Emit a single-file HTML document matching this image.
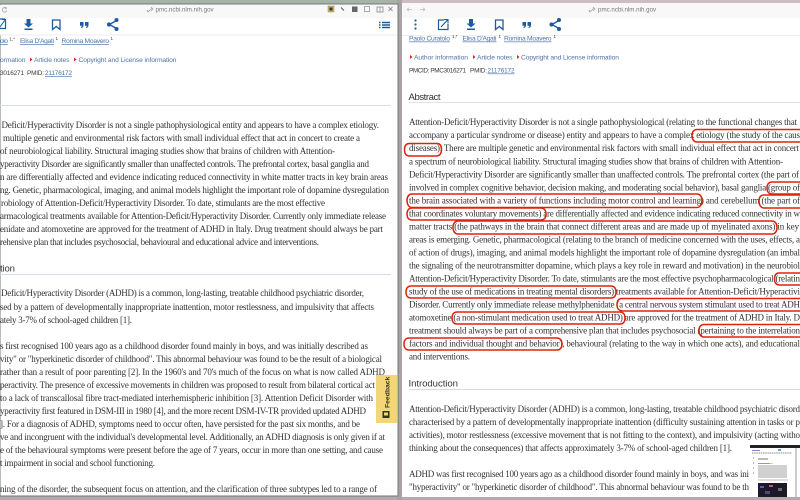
<!DOCTYPE html>
<html lang="en"><head><meta charset="utf-8"><title>PMC article</title>
<style>
html,body{margin:0;padding:0;width:800px;height:500px;overflow:hidden;background:#b5a9ad}
svg{display:block;filter:blur(.3px)}
.b{font:9px "Liberation Serif",serif;fill:#333}
.s{font:6.700px "Liberation Sans",sans-serif;fill:#5173ac}
.m{font:6.400px "Liberation Sans",sans-serif;fill:#3c3c3c}
.h{font:9.600px "Liberation Sans",sans-serif;fill:#333}
.u{font:6.200px "Liberation Sans",sans-serif;fill:#777}
.ic{fill:#1f5a9c}
.ov{fill:none;stroke:#e0220a;stroke-width:1.500}
</style></head><body>
<svg width="800" height="500" viewBox="0 0 800 500" xmlns="http://www.w3.org/2000/svg">
<defs>
<clipPath id="cl"><rect x="0" y="4" width="397" height="492"/></clipPath>
<clipPath id="cr"><rect x="402" y="3" width="398" height="494"/></clipPath>
</defs>
<rect width="800" height="500" fill="#b5a9ad"/>
<rect width="400" height="4" fill="#a7b3a6"/>
<rect x="400" width="400" height="4" fill="#cdbdc0"/>
<rect x="397" y="0" width="5" height="500" fill="#a9a3a6"/>

<!-- LEFT WINDOW -->
<rect x="0" y="4" width="398" height="492" fill="#fff" stroke="#6d7a70" stroke-width="1"/>
<g clip-path="url(#cl)">
<rect x="0" y="5" width="397" height="13" fill="#f7f8f7"/>
<path d="M6 8a2.300 2.300 0 1 0 .8 2.500M6.200 7v1.800H4.500" fill="none" stroke="#999" stroke-width=".7"/>
<path d="M149 11l3-3M151 7l2 2-2 2M148 10l-1 1 1 1 1-1" stroke="#999" fill="none" stroke-width=".7"/>
<text x="155.500" y="11.500" class="u">pmc.ncbi.nlm.nih.gov</text>
<rect x="328" y="6" width="6" height="6" fill="#c9b46a" stroke="#9a8d60" stroke-width=".5"/><rect x="329.500" y="7.500" width="3" height="3" fill="#333"/>
<path d="M341 7.500l3 3" stroke="#555" stroke-width="1"/>
<rect x="352" y="6.500" width="5.500" height="5.500" fill="#666"/>
<rect x="364.500" y="6.500" width="5" height="5" fill="none" stroke="#999" stroke-width=".8"/>
<rect x="377" y="7" width="6" height="5" fill="none" stroke="#888" stroke-width=".8"/><path d="M380 7v5" stroke="#888" stroke-width=".7"/>
<path d="M388.500 7l4 4M392.500 7l-4 4" stroke="#777" stroke-width=".8"/>

<rect x="0" y="18" width="397" height="17" fill="#fff"/>
<path d="M0 35H397" stroke="#eceef0" stroke-width="1"/>
<path d="M0 19h5M5.500 19v9.500H0" fill="none" stroke="#1f5a9c" stroke-width="1.200"/><path d="M0 27l5-7M2 19.500h3.500V23" fill="none" stroke="#1f5a9c" stroke-width="1"/>
<path class="ic" d="M26.500 19h4v4.500h2.500l-4.500 4-4.500-4h2.500zM24.500 28.500h8v1.500h-8z"/>
<path d="M52.500 20h7.500v9.500l-3.700-3-3.800 3z" fill="none" stroke="#1f5a9c" stroke-width="1.300"/>
<path class="ic" d="M80 22h3.500v3.200c0 1.300-.8 2.300-2.200 2.800l-.4-.9c.7-.3 1-.8 1-1.400H80zM85 22h3.500v3.200c0 1.300-.8 2.300-2.200 2.800l-.4-.9c.7-.3 1-.8 1-1.400H85z"/>
<path d="M109.500 24.500l7-4M109.500 24.500l7 4" stroke="#1f5a9c" stroke-width="1.300" fill="none"/><circle class="ic" cx="109" cy="24.500" r="2.100"/><circle class="ic" cx="116.500" cy="20" r="2"/><circle class="ic" cx="116.500" cy="29" r="2"/>
<path d="M379 22.500h1.500M382 22.500h8M379 25h1.500M382 25h8M379 27.500h1.500M382 27.500h8" stroke="#1f5a9c" stroke-width="1.400"/>

<text x="0" y="43" class="s" textLength="8" lengthAdjust="spacing" text-decoration="underline">olo</text>
<text x="9.500" y="40.500" class="m" style="font-size:4.500px">1,*</text>
<text x="20" y="43" class="s" textLength="34" lengthAdjust="spacing" text-decoration="underline">Elisa D'Agati</text>
<text x="55.500" y="40" class="m" style="font-size:4.500px">1</text>
<text x="61.500" y="43" class="s" textLength="47.500" lengthAdjust="spacing" text-decoration="underline">Romina Moavero</text>
<text x="110.500" y="40" class="m" style="font-size:4.500px">1</text>
<text x="0" y="62" class="s" textLength="25.500" lengthAdjust="spacing">ormation</text>
<path d="M30 57.500l2.500 2-2.500 2z" fill="#d9281a"/>
<text x="34" y="62" class="s" textLength="35.500" lengthAdjust="spacing">Article notes</text>
<path d="M74 57.500l2.500 2-2.500 2z" fill="#d9281a"/>
<text x="78.500" y="62" class="s" textLength="98" lengthAdjust="spacing">Copyright and License information</text>
<text x="0" y="75" class="m" textLength="24" lengthAdjust="spacing">3016271</text>
<text x="27" y="75" class="m" textLength="17" lengthAdjust="spacing">PMID:</text>
<text x="45" y="75" class="m" textLength="27" lengthAdjust="spacing" style="fill:#4a6da8" text-decoration="underline">21176172</text>
<path d="M0 105.500H391" stroke="#d9dde6" stroke-width="1"/>

<text class="b" x="1.500" y="128" textLength="377.500" lengthAdjust="spacing">Deficit/Hyperactivity Disorder is not a single pathophysiological entity and appears to have a complex etiology.</text>
<text class="b" x="3" y="141" textLength="357" lengthAdjust="spacing">multiple genetic and environmental risk factors with small individual effect that act in concert to create a</text>
<text class="b" x="0" y="154" textLength="335" lengthAdjust="spacing">of neurobiological liability. Structural imaging studies show that brains of children with Attention-</text>
<text class="b" x="0" y="167" textLength="369" lengthAdjust="spacing">yperactivity Disorder are significantly smaller than unaffected controls. The prefrontal cortex, basal ganglia and</text>
<text class="b" x="0" y="180" textLength="388" lengthAdjust="spacing">n are differentially affected and evidence indicating reduced connectivity in white matter tracts in key brain areas</text>
<text class="b" x="0" y="193" textLength="389" lengthAdjust="spacing">ng. Genetic, pharmacological, imaging, and animal models highlight the important role of dopamine dysregulation</text>
<text class="b" x="1" y="206" textLength="324" lengthAdjust="spacing">robiology of Attention-Deficit/Hyperactivity Disorder. To date, stimulants are the most effective</text>
<text class="b" x="0" y="219" textLength="386" lengthAdjust="spacing">armacological treatments available for Attention-Deficit/Hyperactivity Disorder. Currently only immediate release</text>
<text class="b" x="0" y="232" textLength="383" lengthAdjust="spacing">enidate and atomoxetine are approved for the treatment of ADHD in Italy. Drug treatment should always be part</text>
<text class="b" x="0" y="245" textLength="319" lengthAdjust="spacing">rehensive plan that includes psychosocial, behavioural and educational advice and interventions.</text>

<text class="h" x="0" y="271.500" textLength="15" lengthAdjust="spacing">tion</text>
<path d="M0 274.500H391" stroke="#d5dcec" stroke-width="1"/>

<text class="b" x="1" y="296" textLength="363" lengthAdjust="spacing">Deficit/Hyperactivity Disorder (ADHD) is a common, long-lasting, treatable childhood psychiatric disorder,</text>
<text class="b" x="0" y="310" textLength="374" lengthAdjust="spacing">sed by a pattern of developmentally inappropriate inattention, motor restlessness, and impulsivity that affects</text>
<text class="b" x="0" y="323" textLength="132" lengthAdjust="spacing">ately 3-7% of school-aged children [1].</text>
<text class="b" x="0" y="349" textLength="368" lengthAdjust="spacing">s first recognised 100 years ago as a childhood disorder found mainly in boys, and was initially described as</text>
<text class="b" x="0" y="362" textLength="382" lengthAdjust="spacing">vity" or "hyperkinetic disorder of childhood". This abnormal behaviour was found to be the result of a biological</text>
<text class="b" x="0" y="375" textLength="385" lengthAdjust="spacing">rather than a result of poor parenting [2]. In the 1960's and 70's much of the focus on what is now called ADHD</text>
<text class="b" x="0" y="388" textLength="375" lengthAdjust="spacing">peractivity. The presence of excessive movements in children was proposed to result from bilateral cortical act</text>
<text class="b" x="0" y="401" textLength="373" lengthAdjust="spacing">to a lack of transcallosal fibre tract-mediated interhemispheric inhibition [3]. Attention Deficit Disorder with</text>
<text class="b" x="0" y="414" textLength="366" lengthAdjust="spacing">yperactivity first featured in DSM-III in 1980 [4], and the more recent DSM-IV-TR provided updated ADHD</text>
<text class="b" x="0" y="427" textLength="360" lengthAdjust="spacing">]. For a diagnosis of ADHD, symptoms need to occur often, have persisted for the past six months, and be</text>
<text class="b" x="0" y="440" textLength="385" lengthAdjust="spacing">ve and incongruent with the individual's developmental level. Additionally, an ADHD diagnosis is only given if at</text>
<text class="b" x="0" y="453" textLength="383" lengthAdjust="spacing">e of the behavioural symptoms were present before the age of 7 years, occur in more than one setting, and cause</text>
<text class="b" x="0" y="466" textLength="155" lengthAdjust="spacing">t impairment in social and school functioning.</text>
<text class="b" x="0" y="492" textLength="377" lengthAdjust="spacing">ning of the disorder, the subsequent focus on attention, and the clarification of three subtypes led to a range of</text>

<rect x="376" y="375" width="21" height="48" fill="#f3d678"/>
<rect x="382.500" y="411" width="7" height="7" fill="#333"/><rect x="384" y="412.500" width="4" height="3" fill="#f3d678"/>
<text transform="translate(389.500,408) rotate(-90)" style="font:bold 6.800px 'Liberation Sans',sans-serif;fill:#333">Feedback</text>
</g>

<!-- RIGHT WINDOW -->
<rect x="402" y="3" width="398" height="494" fill="#fff"/>
<g clip-path="url(#cr)">
<rect x="402" y="3" width="398" height="15" fill="#f8f8f8"/>
<path d="M407 9.500h5M407 9.500l2-1.800M407 9.500l2 1.800M420 9.500h5M425 9.500l-2-1.800M425 9.500l-2 1.800" stroke="#b8b8b8" stroke-width=".7" fill="none"/>
<path d="M591 11l3-3M593 7l2 2-2 2M590 10l-1 1 1 1 1-1" stroke="#999" fill="none" stroke-width=".7"/>
<text x="598" y="11.500" class="u">pmc.ncbi.nlm.nih.gov</text>
<circle class="ic" cx="415.500" cy="20.500" r="1.100"/><circle class="ic" cx="415.500" cy="24.500" r="1.100"/><circle class="ic" cx="415.500" cy="28.500" r="1.100"/>
<path d="M444 20h-5.500v9.500H448V24" fill="none" stroke="#1f5a9c" stroke-width="1.200"/><path d="M441 27l6.500-7M444 19.500h4v4" fill="none" stroke="#1f5a9c" stroke-width="1.100"/>
<path class="ic" d="M469 19h4v4.500h2.500l-4.500 4-4.500-4h2.500zM467 28.500h8v1.500h-8z"/>
<path d="M495.500 20h7.500v9.500l-3.700-3-3.800 3z" fill="none" stroke="#1f5a9c" stroke-width="1.300"/>
<path class="ic" d="M522.500 22h3.500v3.200c0 1.300-.8 2.300-2.200 2.800l-.4-.9c.7-.3 1-.8 1-1.400h-1.900zM527.500 22h3.500v3.200c0 1.300-.8 2.300-2.200 2.800l-.4-.9c.7-.3 1-.8 1-1.400h-1.900z"/>
<path d="M552 24.500l7-4M552 24.500l7 4" stroke="#1f5a9c" stroke-width="1.300" fill="none"/><circle class="ic" cx="551.500" cy="24.500" r="2.100"/><circle class="ic" cx="559" cy="20" r="2"/><circle class="ic" cx="559" cy="29" r="2"/>
<path d="M402 35.500H800" stroke="#eceef0"/>

<text x="409" y="40.500" class="s" textLength="41" lengthAdjust="spacing" text-decoration="underline">Paolo Curatolo</text>
<text x="452" y="38" class="m" style="font-size:4.500px">1,*</text>
<text x="462.500" y="40.500" class="s" textLength="34" lengthAdjust="spacing" text-decoration="underline">Elisa D'Agati</text>
<text x="498.500" y="38" class="m" style="font-size:4.500px">1</text>
<text x="504" y="40.500" class="s" textLength="47.500" lengthAdjust="spacing" text-decoration="underline">Romina Moavero</text>
<text x="553.500" y="38" class="m" style="font-size:4.500px">1</text>
<path d="M410 55l2.500 2-2.500 2z" fill="#d9281a"/>
<text x="414" y="59.500" class="s" textLength="54" lengthAdjust="spacing">Author information</text>
<path d="M473 55l2.500 2-2.500 2z" fill="#d9281a"/>
<text x="477" y="59.500" class="s" textLength="35.500" lengthAdjust="spacing">Article notes</text>
<path d="M517 55l2.500 2-2.500 2z" fill="#d9281a"/>
<text x="521" y="59.500" class="s" textLength="98" lengthAdjust="spacing">Copyright and License information</text>
<text x="409" y="72.500" class="m" textLength="57" lengthAdjust="spacing">PMCID: PMC3016271</text>
<text x="470" y="72.500" class="m" textLength="17" lengthAdjust="spacing">PMID:</text>
<text x="487.500" y="72.500" class="m" textLength="27" lengthAdjust="spacing" style="fill:#4a6da8" text-decoration="underline">21176172</text>
<text class="h" x="408.500" y="100" textLength="32" lengthAdjust="spacing">Abstract</text>
<path d="M409 102.500H800" stroke="#dfe2e8" stroke-width="1"/>

<text class="b" x="409" y="125" textLength="388" lengthAdjust="spacing">Attention-Deficit/Hyperactivity Disorder is not a single pathophysiological (relating to the functional changes that</text>
<text class="b" x="409" y="138" textLength="391" lengthAdjust="spacing">accompany a particular syndrome or disease) entity and appears to have a complex etiology (the study of the caus</text>
<text class="b" x="409" y="151" textLength="390" lengthAdjust="spacing">diseases). There are multiple genetic and environmental risk factors with small individual effect that act in concert</text>
<text class="b" x="409" y="164.500" textLength="374" lengthAdjust="spacing">a spectrum of neurobiological liability. Structural imaging studies show that brains of children with Attention-</text>
<text class="b" x="409" y="177.500" textLength="390" lengthAdjust="spacing">Deficit/Hyperactivity Disorder are significantly smaller than unaffected controls. The prefrontal cortex (the part of</text>
<text class="b" x="409" y="190.500" textLength="391" lengthAdjust="spacing">involved in complex cognitive behavior, decision making, and moderating social behavior), basal ganglia (group of</text>
<text class="b" x="409" y="203.500" textLength="391" lengthAdjust="spacing">the brain associated with a variety of functions including motor control and learning) and cerebellum (the part of</text>
<text class="b" x="409" y="216.500" textLength="391" lengthAdjust="spacing">that coordinates voluntary movements) are differentially affected and evidence indicating reduced connectivity in w</text>
<text class="b" x="409" y="229.500" textLength="390" lengthAdjust="spacing">matter tracts (the pathways in the brain that connect different areas and are made up of myelinated axons) in key</text>
<text class="b" x="409" y="242.500" textLength="391" lengthAdjust="spacing">areas is emerging. Genetic, pharmacological (relating to the branch of medicine concerned with the uses, effects, a</text>
<text class="b" x="409" y="255.500" textLength="391" lengthAdjust="spacing">of action of drugs), imaging, and animal models highlight the important role of dopamine dysregulation (an imbal</text>
<text class="b" x="409" y="268.500" textLength="391" lengthAdjust="spacing">the signaling of the neurotransmitter dopamine, which plays a key role in reward and motivation) in the neurobiol</text>
<text class="b" x="409" y="281.500" textLength="391" lengthAdjust="spacing">Attention-Deficit/Hyperactivity Disorder. To date, stimulants are the most effective psychopharmacological (relatin</text>
<text class="b" x="409" y="294.500" textLength="391" lengthAdjust="spacing">study of the use of medications in treating mental disorders) treatments available for Attention-Deficit/Hyperactivi</text>
<text class="b" x="409" y="307.500" textLength="391" lengthAdjust="spacing">Disorder. Currently only immediate release methylphenidate (a central nervous system stimulant used to treat ADH</text>
<text class="b" x="409" y="320.500" textLength="391" lengthAdjust="spacing">atomoxetine (a non-stimulant medication used to treat ADHD) are approved for the treatment of ADHD in Italy. D</text>
<text class="b" x="409" y="333.500" textLength="391" lengthAdjust="spacing">treatment should always be part of a comprehensive plan that includes psychosocial (pertaining to the interrelation</text>
<text class="b" x="409" y="346.500" textLength="391" lengthAdjust="spacing">factors and individual thought and behavior), behavioural (relating to the way in which one acts), and educational</text>
<text class="b" x="409" y="359.500" textLength="61" lengthAdjust="spacing">and interventions.</text>

<path d="M800 129.500H697c-3 0-5 2-5 6s2 6.500 5 6.500h103" class="ov"/>
<path d="M437 143.500c3 0 4.500 2 4.500 6s-2 6.500-5 6.500h-27c-3 0-5-2-5-6.500s2-6 5-6z" class="ov"/>
<path d="M800 182h-28c-3 0-5 2-5 6s2 6 5 6h28" class="ov"/>
<path d="M412 194h285c3 0 5 2.500 5 6.500s-2 7-5 7H412c-3 0-5-3-5-7s2-6.500 5-6.500z" class="ov"/>
<path d="M800 195h-36c-3 0-5 2-5 6s2 7 5 7h36" class="ov"/>
<path d="M412 208h129c3 0 5 2 5 6s-2 6-5 6H412c-3 0-5-2-5-6s2-6 5-6z" class="ov"/>
<path d="M458 221h314c3 0 5 2.500 5 6.500s-2 6.500-5 6.500H458c-3 0-5-2.500-5-6.500s2-6.500 5-6.500z" class="ov"/>
<path d="M800 273h-21c-3 0-4.500 2-4.500 6s2 6 5 6h20.500" class="ov"/>
<path d="M411 286h200c3 0 5 2 5 6s-2 6-5 6H411c-3 0-5-2-5-6s2-6 5-6z" class="ov"/>
<path d="M800 298.500H622c-3 0-5 2-5 6.500s3 6 6 6h177" class="ov"/>
<path d="M457 312h163c3 0 5 2 5 6s-2 6-5 6H457c-3 0-5-2-5-6s2-6 5-6z" class="ov"/>
<path d="M800 324.500H704c-3 0-5 2-5 6s2 6.500 5 6.500h96" class="ov"/>
<path d="M409 338h148c3 0 5 2 5 6s-2 6-5 6H409c-3 0-5-2-5-6s2-6 5-6z" class="ov"/>

<text class="h" x="408.500" y="386.500" textLength="49.500" lengthAdjust="spacing">Introduction</text>
<path d="M409 389.500H800" stroke="#d9d9e4" stroke-width="1"/>
<text class="b" x="409" y="412" textLength="391" lengthAdjust="spacing">Attention-Deficit/Hyperactivity Disorder (ADHD) is a common, long-lasting, treatable childhood psychiatric disord</text>
<text class="b" x="409" y="425" textLength="391" lengthAdjust="spacing">characterised by a pattern of developmentally inappropriate inattention (difficulty sustaining attention in tasks or p</text>
<text class="b" x="409" y="438" textLength="391" lengthAdjust="spacing">activities), motor restlessness (excessive movement that is not fitting to the context), and impulsivity (acting witho</text>
<text class="b" x="409" y="451" textLength="323" lengthAdjust="spacing">thinking about the consequences) that affects approximately 3-7% of school-aged children [1].</text>
<text class="b" x="409" y="477" textLength="340" lengthAdjust="spacing">ADHD was first recognised 100 years ago as a childhood disorder found mainly in boys, and was ini</text>
<text class="b" x="409" y="490" textLength="340" lengthAdjust="spacing">"hyperactivity" or "hyperkinetic disorder of childhood". This abnormal behaviour was found to be th</text>

<!-- thumbnail -->
<rect x="749" y="444" width="51" height="53" fill="#fff"/>
<rect x="750" y="445" width="50" height="3" fill="#222"/>
<path d="M796 448V497" stroke="#999" stroke-width="1"/>
<rect x="752" y="450" width="8" height="1" fill="#9a7ad0"/><rect x="778" y="449" width="3" height="2" fill="#6f9ad6"/>
<path d="M752 453h40" stroke="#888" stroke-width="1" stroke-dasharray="1.500 .7"/>
<path d="M753 458h1M753 463h1M753 468h1M753 473h1" stroke="#777"/>
<path d="M758 459h10" stroke="#777"/>
<path d="M758 463.500h12" stroke="#999"/><rect x="770" y="463" width="3" height="1" fill="#e9d585"/>
<rect x="758" y="465" width="29" height="13" fill="#d0d0d0"/>
<path d="M758 480h30" stroke="#bbb"/>
<rect x="758" y="483" width="29" height="14" fill="#1c1a28"/>
<rect x="760" y="486" width="4" height="2" fill="#5a58c8"/><rect x="769" y="485" width="4" height="2" fill="#b45a8a"/><rect x="765" y="491" width="5" height="3" fill="#4a4a70"/><rect x="778" y="488" width="4" height="3" fill="#6a6a6a"/>
</g>
</svg>
</body></html>
